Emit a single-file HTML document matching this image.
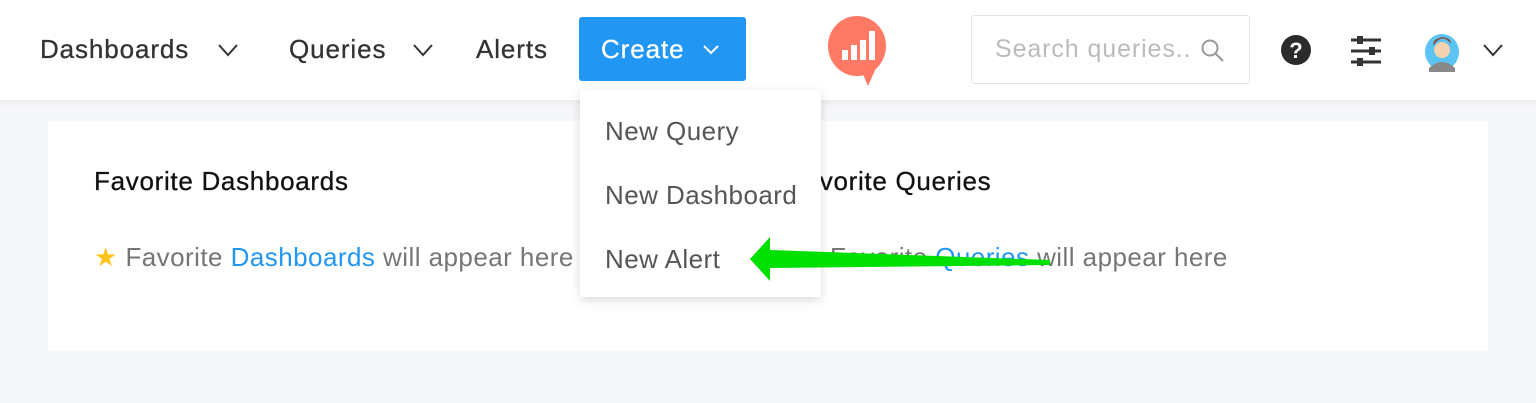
<!DOCTYPE html>
<html><head><style>
body{margin:0;width:1536px;height:403px;background:#f6f7f9;font-family:"Liberation Sans",sans-serif;position:relative;overflow:hidden}
.nav{position:absolute;left:0;top:0;width:1536px;height:100px;background:#fff;box-shadow:0 2px 8px rgba(0,0,0,.06)}
.t{position:absolute;white-space:nowrap}
.card{position:absolute;left:48px;top:121px;width:1440px;height:230px;background:#fff;border-radius:3px}
.menu{position:absolute;left:580px;top:90px;width:241px;height:207px;background:#fff;border-radius:3px;box-shadow:0 3px 10px rgba(0,0,0,.15)}
.n{font-size:26px;letter-spacing:0.9px;-webkit-text-stroke:0.3px}
.m{font-size:26px;letter-spacing:0.45px;color:#555}
</style></head><body>
<div class="nav">
<div class="t n" style="left:40px;top:34px;color:#333">Dashboards</div>
<svg style="position:absolute;left:217px;top:42px" width="22" height="16"><path d="M2 3 L11 13 L20 3" stroke="#333" stroke-width="2" fill="none"/></svg>
<div class="t n" style="left:289px;top:34px;color:#333">Queries</div>
<svg style="position:absolute;left:412px;top:42px" width="22" height="16"><path d="M2 3 L11 13 L20 3" stroke="#333" stroke-width="2" fill="none"/></svg>
<div class="t n" style="left:476px;top:34px;color:#333">Alerts</div>
<div style="position:absolute;left:579px;top:17px;width:167px;height:64px;background:#2196f3;border-radius:3px"></div>
<div class="t n" style="left:601px;top:34px;color:#fff">Create</div>
<svg style="position:absolute;left:702px;top:44px" width="18" height="12"><path d="M2 2 L9 9 L16 2" stroke="#fff" stroke-width="2" fill="none"/></svg>
<svg style="position:absolute;left:826px;top:12px" width="64" height="76"><ellipse cx="31" cy="34" rx="29" ry="30" fill="#ff7964"/><path d="M36 60 L42 74 L50 56Z" fill="#ff7964"/><rect x="16" y="38" width="6" height="10" fill="#fff"/><rect x="25" y="33" width="6" height="15" fill="#fff"/><rect x="34" y="28" width="6" height="20" fill="#fff"/><rect x="43" y="19" width="6" height="29" fill="#fff"/></svg>
<div style="position:absolute;left:971px;top:15px;width:277px;height:67px;border:1px solid #e3e3e3;border-radius:3px"></div>
<div class="t" style="left:995px;top:35px;font-size:25px;letter-spacing:0.9px;color:#bbb">Search queries..</div>
<svg style="position:absolute;left:1200px;top:38px" width="26" height="26"><circle cx="10" cy="10" r="7.5" stroke="#999" stroke-width="2" fill="none"/><path d="M15.5 15.5 L23 23" stroke="#999" stroke-width="2"/></svg>
<svg style="position:absolute;left:1280px;top:34px" width="32" height="32"><circle cx="16" cy="16" r="15" fill="#2b2b2b"/><text x="16" y="24" font-size="22" font-weight="bold" text-anchor="middle" fill="#fff" font-family="Liberation Sans">?</text></svg>
<svg style="position:absolute;left:1348px;top:34px" width="36" height="34"><g stroke="#333" stroke-width="3"><path d="M3 6H33M3 17H33M3 28H33"/></g><rect x="9" y="2" width="6" height="8" fill="#333"/><rect x="21" y="13" width="6" height="8" fill="#333"/><rect x="9" y="24" width="6" height="8" fill="#333"/></svg>
<svg style="position:absolute;left:1424px;top:28px" width="36" height="44"><ellipse cx="18" cy="24" rx="17" ry="18" fill="#5cc3f5"/><path d="M5 40 Q18 28 31 40 L31 44 L5 44Z" fill="#888"/><circle cx="18" cy="22" r="8" fill="#f5d2b0"/><path d="M9 18 Q18 4 27 16 L26 12 Q18 6 10 13Z" fill="#8b4a2b"/></svg>
<svg style="position:absolute;left:1482px;top:42px" width="22" height="16"><path d="M2 3 L11 13 L20 3" stroke="#333" stroke-width="2" fill="none"/></svg>
</div>
<div class="card">
<div class="t" style="left:46px;top:45px;font-size:26px;letter-spacing:0.7px;-webkit-text-stroke:0.3px;color:#111">Favorite Dashboards</div>
<div class="t" style="left:46px;top:121px;font-size:26px;letter-spacing:0.45px;color:#767676"><span style="color:#fcc419">★</span> Favorite <span style="color:#2196f3">Dashboards</span> will appear here</div>
<div class="t" style="left:740px;top:45px;font-size:26px;letter-spacing:0.7px;-webkit-text-stroke:0.3px;color:#111">Favorite Queries</div>
<div class="t" style="left:782px;top:121px;font-size:26px;letter-spacing:0.45px;color:#767676">Favorite <span style="color:#2196f3">Queries</span> will appear here</div>
</div>
<div class="menu">
<div class="t m" style="left:25px;top:26px">New Query</div>
<div class="t m" style="left:25px;top:90px">New Dashboard</div>
<div class="t m" style="left:25px;top:154px">New Alert</div>
</div>
<svg style="position:absolute;left:0;top:0" width="1536" height="403"><path d="M750 259 L770 237 L770 250 L1050 260 L1050 265 L770 268 L770 281Z" fill="#00e000"/></svg>
</body></html>
